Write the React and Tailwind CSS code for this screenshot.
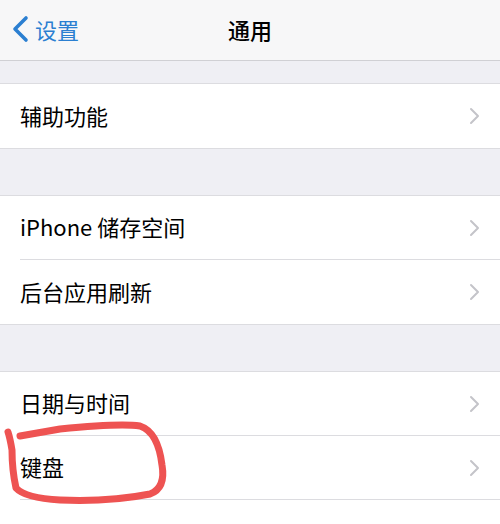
import React from "react";

const font = { fontFamily: '"Noto Sans CJK SC", "Noto Sans", sans-serif' };

function Chevron() {
  return (
    <svg width="12" height="18" viewBox="0 0 12 18" className="shrink-0">
      <path d="M2 2 L9 9 L2 16" fill="none" stroke="#c4c4c9" strokeWidth="2" strokeLinecap="round" strokeLinejoin="round" />
    </svg>
  );
}

function Row({ label, last }) {
  return (
    <div className="flex h-[64px] items-center bg-white pl-[20px]">
      <div className={`flex h-full flex-1 items-center pr-[19px] ${last ? "" : "border-b border-[#dcdce0]"}`}>
        <span className="mb-[3px] flex-1 text-[22px] leading-none text-black">{label}</span>
        <Chevron />
      </div>
    </div>
  );
}

function Group({ items }) {
  return (
    <div className="border-y border-[#dcdce0]">
      {items.map((l, i) => (
        <Row key={l} label={l} last={i === items.length - 1} />
      ))}
    </div>
  );
}

export default function App() {
  return (
    <div className="relative h-[524px] w-[500px] overflow-hidden bg-[#efeff4]" style={font}>
      <div className="relative flex h-[61px] items-center justify-center border-b border-[#d0d0d4] bg-[#f7f7f8]">
        <div className="absolute left-[11px] top-0 flex h-full items-center gap-[6px]">
          <svg width="18" height="28" viewBox="0 0 18 28" className="mb-[2px]">
            <path d="M15 3 L4 14 L15 25" fill="none" stroke="#2b7fd1" strokeWidth="3.6" strokeLinecap="round" strokeLinejoin="round" />
          </svg>
          <span className="mb-[3px] text-[22px] leading-none text-[#2b7fd1]">设置</span>
        </div>
        <span className="mb-[3px] text-[22px] font-medium leading-none text-black">通用</span>
      </div>
      <div className="h-[22px]" />
      <Group items={["辅助功能"]} />
      <div className="h-[46px]" />
      <Group items={["iPhone 储存空间", "后台应用刷新"]} />
      <div className="h-[46px]" />
      <Group items={["日期与时间", "键盘", ""]} />
      <svg className="pointer-events-none absolute left-0 top-0" width="500" height="524" viewBox="0 0 500 524">
        <path
          d="M20 436 L60 429 Q120 423 140 426 Q158 432 162 465 Q166 488 150 494 Q110 502 60 500 Q25 498 16 488 Q12 470 12 450 Q10 438 8 432"
          fill="none"
          stroke="#ee5352"
          strokeWidth="7"
          strokeLinecap="round"
          strokeLinejoin="round"
        />
      </svg>
    </div>
  );
}
